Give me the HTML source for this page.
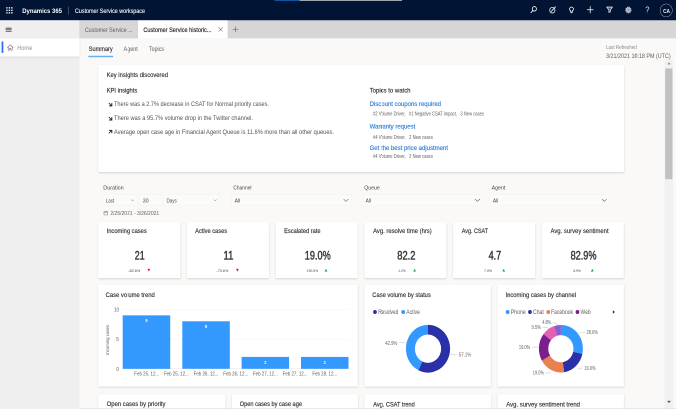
<!DOCTYPE html>
<html lang="en">
<head>
<meta charset="utf-8">
<title>Customer Service workspace - Dynamics 365</title>
<style>
html{background:#faf9f8;overflow:hidden;}
html,body{margin:0;padding:0;}
body{width:676px;height:409px;overflow:hidden;position:relative;background:#faf9f8;font-family:"Liberation Sans", sans-serif;}
#stage{position:absolute;left:0;top:0;width:1352px;height:818px;overflow:hidden;transform-origin:0 0;transform:scale(0.5);will-change:transform;}
#app{position:absolute;left:0;top:0;width:676px;height:409px;overflow:hidden;transform-origin:0 0;transform:scale(2);}
#shapes{width:676px;height:409px;overflow:hidden;}
#labels{width:676px;height:409px;overflow:hidden;}
#app div,#app svg,#app span{position:absolute;display:block;left:0;top:0;transform-origin:0 0;}
#app span{white-space:pre;}
</style>
</head>
<body>
<div id="stage">
<div id="app">
<div id="shapes">
<div style="width:5504.0px;height:210.8px;background:#011433;transform:translate(-6.00px,-6.00px) scale(0.125);"></div>
<div style="width:202.4px;height:54.4px;background:#1269c4;transform:translate(274.30px,-6.00px) scale(0.125);"></div>
<div style="width:819.2px;height:54.4px;background:#d6d6d6;transform:translate(299.60px,-6.00px) scale(0.125);"></div>
<div style="width:5504.0px;height:144.4px;background:#d6d6d6;transform:translate(-6.00px,20.35px) scale(0.125);"></div>
<div style="width:683.2px;height:144.4px;background:#efefef;transform:translate(-6.00px,20.35px) scale(0.125);"></div>
<div style="width:468.8px;height:144.4px;background:#d7d7d7;transform:translate(79.40px,20.35px) scale(0.125);"></div>
<div style="width:716.8px;height:144.4px;background:#ffffff;transform:translate(138.00px,20.35px) scale(0.125);"></div>
<div style="width:683.2px;height:3012.8px;background:#efefef;transform:translate(-6.00px,38.40px) scale(0.125);"></div>
<div style="width:683.2px;height:144.0px;background:#ffffff;box-shadow:0 7.20px 19.20px rgba(0,0,0,0.10);transform:translate(-6.00px,38.40px) scale(0.125);"></div>
<div style="width:14.4px;height:92.8px;background:#2f6df6;border-radius:6.40px;transform:translate(1.60px,41.40px) scale(0.125);"></div>
<div style="width:68.0px;height:2848.0px;background:#f1f1f1;transform:translate(664.50px,59.00px) scale(0.125);"></div>
<div style="width:58.4px;height:886.4px;background:#c1c1c1;transform:translate(665.20px,68.40px) scale(0.125);"></div>
<svg style="transform:translate(667.00px,62.40px);" width="4.00" height="2.40" viewBox="0 0 10 6"><path d="M5 0 L10 6 L0 6 Z" fill="#8a8a8a"/></svg>
<svg style="transform:translate(667.00px,400.80px);" width="4.00" height="2.40" viewBox="0 0 10 6"><path d="M0 0 L10 0 L5 6 Z" fill="#505050"/></svg>
<svg style="transform:translate(6.10px,7.00px);" width="6.60" height="6.70" viewBox="0 0 6.5 6.5"><rect x="0.12" y="0.12" width="1.36" height="1.36" fill="#fff"/><rect x="0.12" y="2.57" width="1.36" height="1.36" fill="#fff"/><rect x="0.12" y="5.02" width="1.36" height="1.36" fill="#fff"/><rect x="2.57" y="0.12" width="1.36" height="1.36" fill="#fff"/><rect x="2.57" y="2.57" width="1.36" height="1.36" fill="#fff"/><rect x="2.57" y="5.02" width="1.36" height="1.36" fill="#fff"/><rect x="5.02" y="0.12" width="1.36" height="1.36" fill="#fff"/><rect x="5.02" y="2.57" width="1.36" height="1.36" fill="#fff"/><rect x="5.02" y="5.02" width="1.36" height="1.36" fill="#fff"/></svg>
<div style="width:4.0px;height:64.8px;background:rgba(255,255,255,0.45);transform:translate(68.15px,6.60px) scale(0.125);"></div>
<svg style="transform:translate(529.85px,5.70px);overflow:visible;" width="7.50" height="8.10" preserveAspectRatio="none" viewBox="0 0 16 16"><circle cx="9.6" cy="6.2" r="4.4" fill="none" stroke="#fff" stroke-width="1.75" stroke-linecap="round" stroke-linejoin="round"/><path d="M6.4 9.6 L2.4 13.6" fill="none" stroke="#fff" stroke-width="1.75" stroke-linecap="round" stroke-linejoin="round"/></svg>
<svg style="transform:translate(548.85px,5.75px);overflow:visible;" width="7.50" height="8.10" preserveAspectRatio="none" viewBox="0 0 16 16"><circle cx="7.4" cy="8.8" r="5.6" fill="none" stroke="#e6e8ee" stroke-width="1.7" stroke-linecap="round" stroke-linejoin="round"/><path d="M5.2 11.0 L14.2 2.0" fill="none" stroke="#fff" stroke-width="1.75" stroke-linecap="round" stroke-linejoin="round"/></svg>
<svg style="transform:translate(568.20px,6.24px);overflow:visible;" width="6.60" height="7.13" preserveAspectRatio="none" viewBox="0 0 16 16"><path d="M5.8 10.4 C3.2 8.6 3.0 6.0 3.8 4.4 C4.6 2.8 6.2 1.8 8 1.8 C9.8 1.8 11.4 2.8 12.2 4.4 C13 6.0 12.8 8.6 10.2 10.4 L10.2 12.6 L5.8 12.6 Z" fill="none" stroke="#fff" stroke-width="1.75" stroke-linecap="round" stroke-linejoin="round"/><path d="M6.2 14.6 L9.8 14.6" fill="none" stroke="#fff" stroke-width="1.75" stroke-linecap="round" stroke-linejoin="round"/></svg>
<svg style="transform:translate(586.70px,5.97px);overflow:visible;" width="7.00" height="7.56" preserveAspectRatio="none" viewBox="0 0 16 16"><path d="M8 1.2 L8 14.8 M1.2 8 L14.8 8" fill="none" stroke="#fff" stroke-width="1.75" stroke-linecap="round" stroke-linejoin="round"/></svg>
<svg style="transform:translate(605.90px,5.60px);overflow:visible;" width="7.40" height="7.99" preserveAspectRatio="none" viewBox="0 0 16 16"><path d="M1.8 3.0 H14.2 L9.6 8.4 V12.6 L6.4 13.6 V8.4 Z" fill="rgba(255,255,255,0.25)" stroke="#dcdfe6" stroke-width="1.7" stroke-linejoin="round"/></svg>
<svg style="transform:translate(624.80px,6.11px);overflow:visible;" width="7.20" height="7.78" preserveAspectRatio="none" viewBox="0 0 16 16"><circle cx="8" cy="8" r="5.6" fill="none" stroke="#c9ccd6" stroke-width="2.6" stroke-dasharray="2.6 1.2"/><circle cx="8" cy="8" r="4.6" fill="#aeb3c2" stroke="#c9ccd6" stroke-width="1.2"/><circle cx="8" cy="8" r="1.6" fill="#7d8498"/></svg>
<div style="width:93.6px;height:100.8px;background:transparent;border-radius:50%;border:3.60px solid rgba(255,255,255,0.8);transform:translate(659.95px,3.70px) scale(0.125);"></div>
<svg style="transform:translate(5.60px,27.60px);" width="6.40" height="4.40" viewBox="0 0 6.4 4.4"><path d="M0 0.5 H6.4 M0 2.2 H6.4 M0 3.9 H6.4" stroke="#3a3a3a" stroke-width="0.95" fill="none"/></svg>
<svg style="transform:translate(218.00px,26.75px);" width="5.20" height="5.30" viewBox="0 0 10 10"><path d="M1 1 L9 9 M9 1 L1 9" stroke="#6a6d78" stroke-width="1.0" fill="none"/></svg>
<svg style="transform:translate(232.40px,26.20px);" width="6.20" height="6.30" viewBox="0 0 10 10"><path d="M5 0.5 V9.5" stroke="#7a4a6a" stroke-width="0.95" fill="none"/><path d="M0.5 5 H9.5" stroke="#6a6a6a" stroke-width="0.95" fill="none"/></svg>
<svg style="transform:translate(6.90px,44.10px);" width="6.60" height="6.80" viewBox="0 0 12 12"><path d="M1 6 L6 1.2 L11 6 M2.4 5 V10.8 H4.8 V7.4 H7.2 V10.8 H9.6 V5" fill="none" stroke="#7a7876" stroke-width="1.1" stroke-linejoin="round" stroke-linecap="round"/></svg>
<div style="width:199.2px;height:12.4px;background:#69b0f2;border-radius:4.00px;transform:translate(88.30px,55.70px) scale(0.125);"></div>
<div style="width:4206.4px;height:855.2px;background:#fff;box-shadow:0 6.40px 16.00px rgba(0,0,0,0.15);transform:translate(98.30px,65.10px) scale(0.125);"></div>
<svg style="transform:translate(107.90px,101.90px);" width="4.50" height="4.60" viewBox="0 0 10 10"><path d="M2.0 2.0 L8 8" fill="none" stroke="#201f1e" stroke-width="1.7"/><path d="M8.7 2.6 V8.7 H2.6" fill="none" stroke="#201f1e" stroke-width="2.2" stroke-linejoin="miter"/></svg>
<svg style="transform:translate(107.90px,116.00px);" width="4.50" height="4.60" viewBox="0 0 10 10"><path d="M2.0 2.0 L8 8" fill="none" stroke="#201f1e" stroke-width="1.7"/><path d="M8.7 2.6 V8.7 H2.6" fill="none" stroke="#201f1e" stroke-width="2.2" stroke-linejoin="miter"/></svg>
<svg style="transform:translate(107.90px,129.70px);" width="4.50" height="4.60" viewBox="0 0 10 10"><path d="M2.0 8.0 L8 2" fill="none" stroke="#201f1e" stroke-width="1.7"/><path d="M2.6 1.3 H8.7 V7.4" fill="none" stroke="#201f1e" stroke-width="2.2" stroke-linejoin="miter"/></svg>
<div style="width:269.6px;height:86.4px;background:#fbfbfa;border-radius:6.40px;box-shadow:0 0 0 3.20px rgba(0,0,0,0.045);transform:translate(103.30px,194.70px) scale(0.125);"></div>
<svg style="transform:translate(130.70px,199.22px);" width="3.60" height="2.16" viewBox="0 0 10 6"><path d="M0.8 0.8 L5 5 L9.2 0.8" fill="none" stroke="#6a6866" stroke-width="1.1"/></svg>
<div style="width:173.6px;height:86.4px;background:#fbfbfa;border-radius:6.40px;box-shadow:0 0 0 3.20px rgba(0,0,0,0.045);transform:translate(139.50px,194.70px) scale(0.125);"></div>
<div style="width:444.0px;height:86.4px;background:#fbfbfa;border-radius:6.40px;box-shadow:0 0 0 3.20px rgba(0,0,0,0.045);transform:translate(163.70px,194.70px) scale(0.125);"></div>
<svg style="transform:translate(213.20px,199.16px);" width="3.80" height="2.28" viewBox="0 0 10 6"><path d="M0.8 0.8 L5 5 L9.2 0.8" fill="none" stroke="#6a6866" stroke-width="1.1"/></svg>
<svg style="transform:translate(103.50px,210.60px);" width="4.60" height="4.80" viewBox="0 0 10 10"><rect x="1" y="1.8" width="8" height="7.4" fill="none" stroke="#797775" stroke-width="1.0"/><path d="M1 4.2 H9 M3.2 0.4 V2.4 M6.8 0.4 V2.4" stroke="#797775" stroke-width="1.0"/></svg>
<div style="width:956.0px;height:86.4px;background:#fbfbfa;border-radius:6.40px;box-shadow:0 0 0 3.20px rgba(0,0,0,0.045);transform:translate(231.80px,194.70px) scale(0.125);"></div>
<svg style="transform:translate(343.20px,198.62px);" width="5.60" height="3.36" viewBox="0 0 10 6"><path d="M0.8 0.8 L5 5 L9.2 0.8" fill="none" stroke="#6a6866" stroke-width="1.1"/></svg>
<div style="width:956.0px;height:86.4px;background:#fbfbfa;border-radius:6.40px;box-shadow:0 0 0 3.20px rgba(0,0,0,0.045);transform:translate(363.00px,194.70px) scale(0.125);"></div>
<svg style="transform:translate(474.50px,198.56px);" width="5.80" height="3.48" viewBox="0 0 10 6"><path d="M0.8 0.8 L5 5 L9.2 0.8" fill="none" stroke="#6a6866" stroke-width="1.1"/></svg>
<div style="width:954.4px;height:86.4px;background:#fbfbfa;border-radius:6.40px;box-shadow:0 0 0 3.20px rgba(0,0,0,0.045);transform:translate(490.30px,194.70px) scale(0.125);"></div>
<svg style="transform:translate(601.60px,198.68px);" width="5.40" height="3.24" viewBox="0 0 10 6"><path d="M0.8 0.8 L5 5 L9.2 0.8" fill="none" stroke="#6a6866" stroke-width="1.1"/></svg>
<div style="width:656.4px;height:444.0px;background:#fff;box-shadow:0 6.40px 16.00px rgba(0,0,0,0.15);transform:translate(98.25px,222.50px) scale(0.125);"></div>
<svg style="transform:translate(147.35px,268.70px);" width="3.00" height="2.90" viewBox="0 0 10 10"><path d="M0 0 L10 0 L5 10 Z" fill="#e81123"/></svg>
<div style="width:656.4px;height:444.0px;background:#fff;box-shadow:0 6.40px 16.00px rgba(0,0,0,0.15);transform:translate(186.95px,222.50px) scale(0.125);"></div>
<svg style="transform:translate(235.90px,268.70px);" width="3.00" height="2.90" viewBox="0 0 10 10"><path d="M0 0 L10 0 L5 10 Z" fill="#e81123"/></svg>
<div style="width:656.4px;height:444.0px;background:#fff;box-shadow:0 6.40px 16.00px rgba(0,0,0,0.15);transform:translate(275.65px,222.50px) scale(0.125);"></div>
<svg style="transform:translate(324.50px,268.70px);" width="3.00" height="2.90" viewBox="0 0 10 10"><path d="M5 0 L10 10 L0 10 Z" fill="#1aab40"/></svg>
<div style="width:656.4px;height:444.0px;background:#fff;box-shadow:0 6.40px 16.00px rgba(0,0,0,0.15);transform:translate(364.35px,222.50px) scale(0.125);"></div>
<svg style="transform:translate(413.10px,268.70px);" width="3.00" height="2.90" viewBox="0 0 10 10"><path d="M5 0 L10 10 L0 10 Z" fill="#1aab40"/></svg>
<div style="width:656.4px;height:444.0px;background:#fff;box-shadow:0 6.40px 16.00px rgba(0,0,0,0.15);transform:translate(453.05px,222.50px) scale(0.125);"></div>
<svg style="transform:translate(502.20px,268.70px);" width="3.00" height="2.90" viewBox="0 0 10 10"><path d="M5 0 L10 10 L0 10 Z" fill="#1aab40"/></svg>
<div style="width:656.4px;height:444.0px;background:#fff;box-shadow:0 6.40px 16.00px rgba(0,0,0,0.15);transform:translate(541.75px,222.50px) scale(0.125);"></div>
<svg style="transform:translate(590.80px,268.70px);" width="3.00" height="2.90" viewBox="0 0 10 10"><path d="M5 0 L10 10 L0 10 Z" fill="#1aab40"/></svg>
<div style="width:2076.4px;height:815.2px;background:#fff;box-shadow:0 6.40px 16.00px rgba(0,0,0,0.15);transform:translate(98.25px,284.70px) scale(0.125);"></div>
<div style="width:1012.0px;height:815.2px;background:#fff;box-shadow:0 6.40px 16.00px rgba(0,0,0,0.15);transform:translate(364.30px,284.70px) scale(0.125);"></div>
<div style="width:1012.0px;height:815.2px;background:#fff;box-shadow:0 6.40px 16.00px rgba(0,0,0,0.15);transform:translate(497.30px,284.70px) scale(0.125);"></div>
<div style="width:1808.8px;height:3.2px;background:#eeeeee;transform:translate(122.70px,309.20px) scale(0.125);"></div>
<div style="width:1808.8px;height:3.2px;background:#eeeeee;transform:translate(122.70px,338.90px) scale(0.125);"></div>
<div style="width:1808.8px;height:3.2px;background:#dddddd;transform:translate(122.70px,368.60px) scale(0.125);"></div>
<div style="width:380.0px;height:427.7px;background:#3399ff;transform:translate(122.70px,315.34px) scale(0.125);"></div>
<div style="width:380.0px;height:380.2px;background:#3399ff;transform:translate(182.30px,321.28px) scale(0.125);"></div>
<div style="width:380.0px;height:95.0px;background:#3399ff;transform:translate(241.60px,356.92px) scale(0.125);"></div>
<div style="width:380.0px;height:95.0px;background:#3399ff;transform:translate(301.00px,356.92px) scale(0.125);"></div>
<div style="width:30.4px;height:32.2px;background:#2a30a8;border-radius:50%;transform:translate(373.10px,309.99px) scale(0.125);"></div>
<div style="width:30.4px;height:32.2px;background:#3399ff;border-radius:50%;transform:translate(401.30px,309.99px) scale(0.125);"></div>
<svg style="transform:translate(0.00px,0.00px);" width="676.00" height="409.00" viewBox="0 0 676 409"><g transform="translate(428.0 348.7) scale(1 1.08)"><path d="M0.00 -22.10 A22.1 22.1 0 1 1 -9.54 19.94 L-5.65 11.82 A13.1 13.1 0 1 0 0.00 -13.10 Z" fill="#2a30a8"/><path d="M-9.54 19.94 A22.1 22.1 0 0 1 -0.00 -22.10 L-0.00 -13.10 A13.1 13.1 0 0 0 -5.65 11.82 Z" fill="#3399ff"/></g><path d="M399 342.7 H405.3 M450.6 354.8 H456.9" stroke="#b0b0b0" stroke-width="0.4" fill="none"/></svg>
<div style="width:30.4px;height:32.2px;background:#3399ff;border-radius:50%;transform:translate(505.70px,309.99px) scale(0.125);"></div>
<div style="width:30.4px;height:32.2px;background:#2a30a8;border-radius:50%;transform:translate(528.10px,309.99px) scale(0.125);"></div>
<div style="width:30.4px;height:32.2px;background:#e8804f;border-radius:50%;transform:translate(546.40px,309.99px) scale(0.125);"></div>
<div style="width:30.4px;height:32.2px;background:#7a1f8c;border-radius:50%;transform:translate(575.60px,309.99px) scale(0.125);"></div>
<svg style="transform:translate(612.50px,310.20px);" width="2.80" height="3.60" viewBox="0 0 6 10"><path d="M0 0 L6 5 L0 10 Z" fill="#323130"/></svg>
<svg style="transform:translate(0.00px,0.00px);" width="676.00" height="409.00" viewBox="0 0 676 409"><g transform="translate(560.9 348.7) scale(1 1.08)"><path d="M0.00 -22.00 A22.0 22.0 0 0 1 21.44 4.93 L12.28 2.83 A12.6 12.6 0 0 0 0.00 -12.60 Z" fill="#3399ff"/><path d="M21.44 4.93 A22.0 22.0 0 0 1 3.30 21.75 L1.89 12.46 A12.6 12.6 0 0 0 12.28 2.83 Z" fill="#2a30a8"/><path d="M3.30 21.75 A22.0 22.0 0 0 1 -19.01 11.08 L-10.89 6.35 A12.6 12.6 0 0 0 1.89 12.46 Z" fill="#e8804f"/><path d="M-19.01 11.08 A22.0 22.0 0 0 1 -17.30 -13.59 L-9.91 -7.79 A12.6 12.6 0 0 0 -10.89 6.35 Z" fill="#7a1f8c"/><path d="M-17.30 -13.59 A22.0 22.0 0 0 1 -6.67 -20.97 L-3.82 -12.01 A12.6 12.6 0 0 0 -9.91 -7.79 Z" fill="#e560b0"/><path d="M-6.67 -20.97 A22.0 22.0 0 0 1 -0.00 -22.00 L-0.00 -12.60 A12.6 12.6 0 0 0 -3.82 -12.01 Z" fill="#8560d0"/></g><path d="M579.3 333.4 L581.6 332.2 H585.3 M577.6 368.3 L579.5 369.0 H582.8 M546 373.0 H550.8 M532.3 347.1 H538.3 M542.5 327.4 H547.3 L548.5 329.2 M552.8 323.0 H556.6 L557.6 325.2" stroke="#b0b0b0" stroke-width="0.4" fill="none"/></svg>
<div style="width:1017.2px;height:205.6px;background:#fff;box-shadow:0 6.40px 16.00px rgba(0,0,0,0.15);transform:translate(98.25px,394.30px) scale(0.125);"></div>
<div style="width:1008.8px;height:205.6px;background:#fff;box-shadow:0 6.40px 16.00px rgba(0,0,0,0.15);transform:translate(231.90px,394.30px) scale(0.125);"></div>
<div style="width:1013.6px;height:205.6px;background:#fff;box-shadow:0 6.40px 16.00px rgba(0,0,0,0.15);transform:translate(364.30px,394.30px) scale(0.125);"></div>
<div style="width:1009.6px;height:205.6px;background:#fff;box-shadow:0 6.40px 16.00px rgba(0,0,0,0.15);transform:translate(497.60px,394.30px) scale(0.125);"></div>
<div style="width:4820.8px;height:53.2px;background:#dedede;transform:translate(79.40px,408.35px) scale(0.125);"></div>
</div>
<div id="labels">
<span style="font-size:6.6px;line-height:13px;font-weight:700;color:#ffffff;transform:translate(22.20px,4.00px) scaleX(0.9040);">Dynamics 365</span>
<span style="font-size:6.27px;line-height:13px;font-weight:400;color:#ffffff;transform:translate(75.00px,4.00px) scaleX(0.8585);-webkit-text-stroke:0.1px currentColor;">Customer Service workspace</span>
<span style="font-size:8.51px;line-height:16px;font-weight:400;color:#e4e6ea;transform:translate(645.30px,1.40px) scaleX(0.8873);">?</span>
<span style="font-size:5.04px;line-height:12px;font-weight:700;color:#f0f1f4;transform:translate(663.10px,5.00px) scaleX(0.9478);">CA</span>
<span style="font-size:6.38px;line-height:13px;font-weight:400;color:#605e5c;transform:translate(85.00px,23.00px) scaleX(0.8219);">Customer Service ...</span>
<span style="font-size:6.38px;line-height:13px;font-weight:400;color:#201f1e;transform:translate(143.40px,23.00px) scaleX(0.8731);-webkit-text-stroke:0.15px currentColor;">Customer Service historic...</span>
<span style="font-size:6.38px;line-height:13px;font-weight:400;color:#939190;transform:translate(17.20px,41.00px) scaleX(0.8814);">Home</span>
<span style="font-size:6.61px;line-height:13px;font-weight:400;color:#323130;transform:translate(88.80px,42.00px) scaleX(0.8451);-webkit-text-stroke:0.16px currentColor;">Summary</span>
<span style="font-size:6.61px;line-height:13px;font-weight:400;color:#605e5c;transform:translate(123.50px,42.00px) scaleX(0.8278);">Agent</span>
<span style="font-size:6.61px;line-height:13px;font-weight:400;color:#605e5c;transform:translate(149.00px,42.00px) scaleX(0.8006);">Topics</span>
<span style="font-size:5.38px;line-height:12px;font-weight:400;color:#8a8886;transform:translate(606.00px,41.00px) scaleX(0.8441);">Last Refreshed</span>
<span style="font-size:6.27px;line-height:13px;font-weight:400;color:#605e5c;transform:translate(606.00px,49.00px) scaleX(0.8595);">3/21/2021 10:18 PM (UTC)</span>
<span style="font-size:6.72px;line-height:13px;font-weight:400;color:#323130;transform:translate(106.60px,68.00px) scaleX(0.8697);-webkit-text-stroke:0.16px currentColor;">Key insights discovered</span>
<span style="font-size:6.72px;line-height:13px;font-weight:400;color:#323130;transform:translate(106.60px,83.70px) scaleX(0.8652);-webkit-text-stroke:0.16px currentColor;">KPI insights</span>
<span style="font-size:6.72px;line-height:13px;font-weight:400;color:#555352;transform:translate(114.00px,97.00px) scaleX(0.8311);">There was a 2.7% decrease in CSAT for Normal priority cases.</span>
<span style="font-size:6.72px;line-height:13px;font-weight:400;color:#555352;transform:translate(114.00px,111.00px) scaleX(0.8483);">There was a 95.7% volume drop in the Twitter channel.</span>
<span style="font-size:6.72px;line-height:13px;font-weight:400;color:#555352;transform:translate(114.00px,125.00px) scaleX(0.8506);">Average open case age in Financial Agent Queue is 11.6% more than all other queues.</span>
<span style="font-size:6.72px;line-height:13px;font-weight:400;color:#323130;transform:translate(369.70px,83.60px) scaleX(0.8881);-webkit-text-stroke:0.16px currentColor;">Topics to watch</span>
<span style="font-size:6.61px;line-height:13px;font-weight:400;color:#2f7fd6;transform:translate(369.60px,97.00px) scaleX(0.9080);-webkit-text-stroke:0.16px currentColor;">Discount coupons required</span>
<span style="font-size:5.26px;line-height:12px;font-weight:400;color:#605e5c;transform:translate(373.00px,107.40px) scaleX(0.7837);">#2 Volume Driver,   #1 Negative CSAT impact,   3 New cases</span>
<span style="font-size:6.61px;line-height:13px;font-weight:400;color:#2f7fd6;transform:translate(369.60px,119.40px) scaleX(0.9059);-webkit-text-stroke:0.16px currentColor;">Warranty request</span>
<span style="font-size:5.26px;line-height:12px;font-weight:400;color:#605e5c;transform:translate(373.00px,131.00px) scaleX(0.7894);">#4 Volume Driver,   2 New cases</span>
<span style="font-size:6.61px;line-height:13px;font-weight:400;color:#2f7fd6;transform:translate(369.60px,141.20px) scaleX(0.9080);-webkit-text-stroke:0.16px currentColor;">Get the best price adjustment</span>
<span style="font-size:5.26px;line-height:12px;font-weight:400;color:#605e5c;transform:translate(373.00px,150.20px) scaleX(0.7894);">#4 Volume Driver,   2 New cases</span>
<span style="font-size:5.82px;line-height:12px;font-weight:400;color:#484644;transform:translate(103.30px,181.50px) scaleX(0.9273);">Duration</span>
<span style="font-size:5.49px;line-height:12px;font-weight:400;color:#484644;transform:translate(106.00px,194.30px) scaleX(0.7709);">Last</span>
<span style="font-size:5.49px;line-height:12px;font-weight:400;color:#484644;transform:translate(142.80px,194.30px) scaleX(0.9498);">30</span>
<span style="font-size:5.49px;line-height:12px;font-weight:400;color:#484644;transform:translate(166.50px,194.30px) scaleX(0.8234);">Days</span>
<span style="font-size:5.82px;line-height:12px;font-weight:400;color:#605e5c;transform:translate(110.40px,207.00px) scaleX(0.8568);">2/25/2021 - 3/26/2021</span>
<span style="font-size:5.82px;line-height:12px;font-weight:400;color:#484644;transform:translate(233.40px,181.50px) scaleX(0.8349);">Channel</span>
<span style="font-size:5.49px;line-height:12px;font-weight:400;color:#484644;transform:translate(234.60px,194.30px) scaleX(0.9014);">All</span>
<span style="font-size:5.82px;line-height:12px;font-weight:400;color:#484644;transform:translate(364.30px,181.50px) scaleX(0.8813);">Queue</span>
<span style="font-size:5.49px;line-height:12px;font-weight:400;color:#484644;transform:translate(365.60px,194.30px) scaleX(0.8850);">All</span>
<span style="font-size:5.82px;line-height:12px;font-weight:400;color:#484644;transform:translate(491.60px,181.50px) scaleX(0.9073);">Agent</span>
<span style="font-size:5.49px;line-height:12px;font-weight:400;color:#484644;transform:translate(492.90px,194.30px) scaleX(0.8850);">All</span>
<span style="font-size:6.72px;line-height:13px;font-weight:400;color:#323130;transform:translate(106.60px,223.90px) scaleX(0.8610);-webkit-text-stroke:0.16px currentColor;">Incoming cases</span>
<span style="font-size:12.4px;line-height:20px;font-weight:400;color:#3b3a39;transform:translate(134.80px,245.60px) scaleX(0.7105);-webkit-text-stroke:0.5px currentColor;">21</span>
<span style="font-size:4.03px;line-height:11px;font-weight:400;color:#484644;transform:translate(128.20px,265.00px) scaleX(0.9476);">-82.6%</span>
<span style="font-size:6.72px;line-height:13px;font-weight:400;color:#323130;transform:translate(195.10px,223.90px) scaleX(0.8483);-webkit-text-stroke:0.16px currentColor;">Active cases</span>
<span style="font-size:12.4px;line-height:20px;font-weight:400;color:#3b3a39;transform:translate(223.50px,245.60px) scaleX(0.7691);-webkit-text-stroke:0.5px currentColor;">11</span>
<span style="font-size:4.03px;line-height:11px;font-weight:400;color:#484644;transform:translate(216.50px,265.00px) scaleX(0.9241);">-73.6%</span>
<span style="font-size:6.72px;line-height:13px;font-weight:400;color:#323130;transform:translate(284.10px,223.90px) scaleX(0.8497);-webkit-text-stroke:0.16px currentColor;">Escalated rate</span>
<span style="font-size:12.4px;line-height:20px;font-weight:400;color:#3b3a39;transform:translate(304.80px,245.60px) scaleX(0.7366);-webkit-text-stroke:0.5px currentColor;">19.0%</span>
<span style="font-size:4.03px;line-height:11px;font-weight:400;color:#484644;transform:translate(306.80px,265.00px) scaleX(0.8267);">190.5%</span>
<span style="font-size:6.72px;line-height:13px;font-weight:400;color:#323130;transform:translate(373.10px,223.90px) scaleX(0.8734);-webkit-text-stroke:0.16px currentColor;">Avg. resolve time (hrs)</span>
<span style="font-size:12.4px;line-height:20px;font-weight:400;color:#3b3a39;transform:translate(397.30px,245.60px) scaleX(0.7499);-webkit-text-stroke:0.5px currentColor;">82.2</span>
<span style="font-size:4.03px;line-height:11px;font-weight:400;color:#484644;transform:translate(398.30px,265.00px) scaleX(0.8165);">1.2%</span>
<span style="font-size:6.72px;line-height:13px;font-weight:400;color:#323130;transform:translate(461.70px,223.90px) scaleX(0.8094);-webkit-text-stroke:0.16px currentColor;">Avg. CSAT</span>
<span style="font-size:12.4px;line-height:20px;font-weight:400;color:#3b3a39;transform:translate(488.60px,245.60px) scaleX(0.7309);-webkit-text-stroke:0.5px currentColor;">4.7</span>
<span style="font-size:4.03px;line-height:11px;font-weight:400;color:#484644;transform:translate(484.00px,265.00px) scaleX(0.8818);">7.0%</span>
<span style="font-size:6.72px;line-height:13px;font-weight:400;color:#323130;transform:translate(550.50px,223.90px) scaleX(0.8805);-webkit-text-stroke:0.16px currentColor;">Avg. survey sentiment</span>
<span style="font-size:12.4px;line-height:20px;font-weight:400;color:#3b3a39;transform:translate(570.60px,245.60px) scaleX(0.7366);-webkit-text-stroke:0.5px currentColor;">82.9%</span>
<span style="font-size:4.03px;line-height:11px;font-weight:400;color:#484644;transform:translate(573.40px,265.00px) scaleX(0.8165);">6.9%</span>
<span style="font-size:6.72px;line-height:13px;font-weight:400;color:#323130;transform:translate(105.60px,288.00px) scaleX(0.8723);-webkit-text-stroke:0.16px currentColor;">Case volume trend</span>
<span style="font-size:6.72px;line-height:13px;font-weight:400;color:#323130;transform:translate(372.30px,288.00px) scaleX(0.8606);-webkit-text-stroke:0.16px currentColor;">Case volume by status</span>
<span style="font-size:6.72px;line-height:13px;font-weight:400;color:#323130;transform:translate(505.50px,288.00px) scaleX(0.8710);-webkit-text-stroke:0.16px currentColor;">Incoming cases by channel</span>
<span style="font-size:5.38px;line-height:12px;font-weight:400;color:#605e5c;transform:translate(113.90px,303.50px) scaleX(0.8856);">10</span>
<span style="font-size:5.38px;line-height:12px;font-weight:400;color:#605e5c;transform:translate(116.30px,333.00px) scaleX(0.9022);">5</span>
<span style="font-size:5.38px;line-height:12px;font-weight:400;color:#605e5c;transform:translate(116.30px,363.00px) scaleX(0.9022);">0</span>
<span style="font-size:4.37px;line-height:11px;font-weight:400;color:#605e5c;transform:translate(107.60px,339.90px) rotate(-90deg) scaleX(0.9947) translate(-15.18px,-5.50px);">Incoming cases</span>
<span style="font-size:4.48px;line-height:11px;font-weight:700;color:#ffffff;transform:translate(145.35px,315.00px) scaleX(0.8828);">9</span>
<span style="font-size:4.48px;line-height:11px;font-weight:700;color:#ffffff;transform:translate(204.95px,321.00px) scaleX(0.8828);">8</span>
<span style="font-size:4.48px;line-height:11px;font-weight:700;color:#ffffff;transform:translate(264.25px,357.00px) scaleX(0.8828);">2</span>
<span style="font-size:4.48px;line-height:11px;font-weight:700;color:#ffffff;transform:translate(323.65px,357.00px) scaleX(0.8828);">2</span>
<span style="font-size:5.38px;line-height:12px;font-weight:400;color:#605e5c;transform:translate(134.30px,367.60px) scaleX(0.8210);">Feb 25, 12...</span>
<span style="font-size:5.38px;line-height:12px;font-weight:400;color:#605e5c;transform:translate(163.97px,367.60px) scaleX(0.8210);">Feb 25, 12...</span>
<span style="font-size:5.38px;line-height:12px;font-weight:400;color:#605e5c;transform:translate(193.64px,367.60px) scaleX(0.8210);">Feb 26, 12...</span>
<span style="font-size:5.38px;line-height:12px;font-weight:400;color:#605e5c;transform:translate(223.31px,367.60px) scaleX(0.8210);">Feb 26, 12...</span>
<span style="font-size:5.38px;line-height:12px;font-weight:400;color:#605e5c;transform:translate(252.98px,367.60px) scaleX(0.8210);">Feb 27, 12...</span>
<span style="font-size:5.38px;line-height:12px;font-weight:400;color:#605e5c;transform:translate(282.65px,367.60px) scaleX(0.8210);">Feb 27, 12...</span>
<span style="font-size:5.38px;line-height:12px;font-weight:400;color:#605e5c;transform:translate(312.32px,367.60px) scaleX(0.8210);">Feb 28, 12...</span>
<span style="font-size:6.16px;line-height:13px;font-weight:400;color:#605e5c;transform:translate(378.20px,305.00px) scaleX(0.7827);">Resolved</span>
<span style="font-size:6.16px;line-height:13px;font-weight:400;color:#605e5c;transform:translate(406.30px,305.00px) scaleX(0.8107);">Active</span>
<span style="font-size:5.38px;line-height:12px;font-weight:400;color:#605e5c;transform:translate(385.20px,337.00px) scaleX(0.7932);">42.9%</span>
<span style="font-size:5.38px;line-height:12px;font-weight:400;color:#605e5c;transform:translate(458.90px,348.40px) scaleX(0.8063);">57.1%</span>
<span style="font-size:6.16px;line-height:13px;font-weight:400;color:#605e5c;transform:translate(510.90px,305.00px) scaleX(0.8309);">Phone</span>
<span style="font-size:6.16px;line-height:13px;font-weight:400;color:#605e5c;transform:translate(533.00px,305.00px) scaleX(0.8300);">Chat</span>
<span style="font-size:6.16px;line-height:13px;font-weight:400;color:#605e5c;transform:translate(551.10px,305.00px) scaleX(0.8095);">Facebook</span>
<span style="font-size:6.16px;line-height:13px;font-weight:400;color:#605e5c;transform:translate(580.50px,305.00px) scaleX(0.8045);">Web</span>
<span style="font-size:5.38px;line-height:12px;font-weight:400;color:#605e5c;transform:translate(586.50px,326.00px) scaleX(0.7473);">28.6%</span>
<span style="font-size:5.38px;line-height:12px;font-weight:400;color:#605e5c;transform:translate(584.30px,362.00px) scaleX(0.7407);">19.0%</span>
<span style="font-size:5.38px;line-height:12px;font-weight:400;color:#605e5c;transform:translate(532.80px,366.50px) scaleX(0.7342);">19.0%</span>
<span style="font-size:5.38px;line-height:12px;font-weight:400;color:#605e5c;transform:translate(518.90px,340.80px) scaleX(0.7407);">19.0%</span>
<span style="font-size:5.38px;line-height:12px;font-weight:400;color:#605e5c;transform:translate(531.50px,321.00px) scaleX(0.7747);">9.5%</span>
<span style="font-size:5.38px;line-height:12px;font-weight:400;color:#605e5c;transform:translate(542.30px,316.00px) scaleX(0.7176);">4.8%</span>
<span style="font-size:6.72px;line-height:13px;font-weight:400;color:#323130;transform:translate(106.70px,397.20px) scaleX(0.8795);-webkit-text-stroke:0.16px currentColor;">Open cases by priority</span>
<span style="font-size:6.72px;line-height:13px;font-weight:400;color:#323130;transform:translate(239.70px,397.20px) scaleX(0.8423);-webkit-text-stroke:0.16px currentColor;">Open cases by case age</span>
<span style="font-size:6.72px;line-height:13px;font-weight:400;color:#323130;transform:translate(373.20px,397.70px) scaleX(0.8354);-webkit-text-stroke:0.16px currentColor;">Avg. CSAT trend</span>
<span style="font-size:6.72px;line-height:13px;font-weight:400;color:#323130;transform:translate(506.30px,397.70px) scaleX(0.8861);-webkit-text-stroke:0.16px currentColor;">Avg. survey sentiment trend</span>
</div>

</div>
</div>
</body>
</html>
